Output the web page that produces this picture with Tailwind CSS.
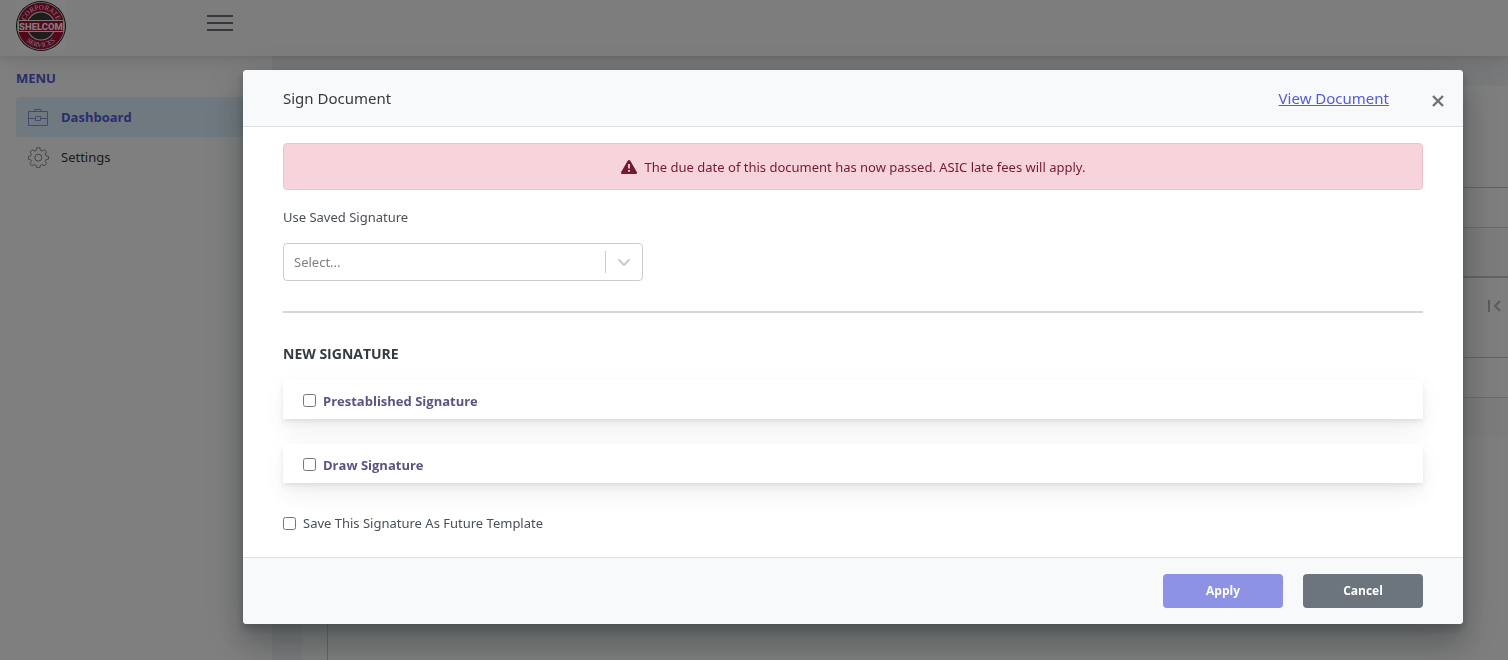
<!DOCTYPE html>
<html lang="en">
<head>
  <meta charset="UTF-8">
  <meta name="viewport" content="width=device-width, initial-scale=1.0">
  <title>Sign Document</title>
  <script src="https://cdn.jsdelivr.net/npm/@tailwindcss/browser@4"></script>
</head>
<body class="h-screen overflow-hidden bg-white font-['Noto_Sans',sans-serif] text-[13px] leading-5 text-[#495057]">

  <!-- App -->
  <div class="flex flex-col h-full">
    <header class="relative z-10 flex h-14 shrink-0 items-start gap-[141px] bg-[#fafbfc] px-4 shadow-[0_7px_35px_rgba(4,9,20,0.03),0_15px_22px_rgba(4,9,20,0.03),0_4px_8px_rgba(4,9,20,0.05),0_2px_3px_rgba(4,9,20,0.03)]">
      <a href="#" aria-label="Shelcom Corporate Services" class="pt-px">
        <svg class="size-[50px] bg-white" viewBox="0 0 50 50">
          <defs>
            <path id="arcTop" d="M8.500 25a16.500 16.500 0 0 1 33 0"/>
            <path id="arcBottom" d="M3.800 25a21.200 21.200 0 0 0 42.400 0"/>
          </defs>
          <circle cx="25" cy="25" r="25" fill="#1d1d1f"/>
          <circle cx="25" cy="25" r="24" fill="#eee"/>
          <circle cx="25" cy="25" r="23.200" fill="#a80d35"/>
          <circle cx="25" cy="25" r="14.400" fill="#eee"/>
          <circle cx="25" cy="25" r="13.400" fill="#3a3a3c"/>
          <text fill="#eee" font-family="Liberation Serif, serif" font-size="7" text-anchor="middle"><textPath href="#arcTop" startOffset="50%">CORPORATE</textPath></text>
          <text fill="#eee" font-family="Liberation Serif, serif" font-size="7" text-anchor="middle"><textPath href="#arcBottom" startOffset="50%">SERVICES</textPath></text>
          <path d="M2.500 19.500h45v11h-45z" fill="#a80d35" stroke="#eee"/>
          <text x="25" y="28.500" fill="#fff" font-family="Roboto, sans-serif" font-size="9.500" font-weight="800" text-anchor="middle">SHELCOM</text>
        </svg>
      </a>
      <button type="button" aria-label="Toggle menu" class="mt-[15px] flex w-[26px] flex-col gap-[5px]">
        <span class="h-0.5 w-full bg-[#6b6e74]"></span>
        <span class="h-0.5 w-full bg-[#6b6e74]"></span>
        <span class="h-0.5 w-full bg-[#6b6e74]"></span>
      </button>
    </header>

    <div class="flex flex-1 min-h-0">
      <nav class="w-68 shrink-0 bg-white px-4 pt-3 font-['Open_Sans',sans-serif]">
        <h5 class="font-bold text-[#545cd8]">MENU</h5>
        <ul class="mt-[9px]">
          <li>
            <a href="#" class="flex h-10 items-center gap-3 rounded bg-[#e0f3ff] pl-3 font-bold text-[#545cd8]">
              <svg class="size-[21px]" viewBox="0 0 21 21" fill="none" stroke="#8d93d6">
                <path d="M.5 4.500h19v14H.5zM7 4.500v-2h6v2M.5 11.500h7M12.500 11.500h7M7.500 9.500h5v4h-5z"/>
              </svg>
              Dashboard
            </a>
          </li>
          <li>
            <a href="#" class="flex h-10 items-center gap-3 pl-3 font-['Noto_Sans',sans-serif] text-[#343a40]">
              <svg class="size-[21px]" viewBox="0 0 21 21" fill="none" stroke="#888" stroke-linejoin="round">
                <path d="M8.700 .8h3.200l.5 2.500 1.800.8 2.200-1.400 2.200 2.200-1.400 2.200.8 1.800 2.500.5v2.800l-2.500.5-.8 1.800 1.400 2.200-2.200 2.200-2.200-1.400-1.800.8-.5 2.400H8.700l-.5-2.400-1.800-.8-2.200 1.400L2 16.700l1.400-2.200-.8-1.800L.5 12.200V9.400l2.100-.5.8-1.800L2 4.900l2.200-2.200 2.200 1.400 1.800-.8z"/>
                <circle cx="10.300" cy="10.600" r="3.500"/>
              </svg>
              Settings
            </a>
          </li>
        </ul>
      </nav>
      <main class="flex-1 bg-[#f1f4f6] pt-[30px] pl-[30px]">
        <div class="h-full bg-[#fcfcfc] pl-[25px]">
          <div class="h-full border-l border-[#c4c4c4]">
            <div class="h-[102px] border-b border-[#c4c4c4]"></div>
            <div class="h-10 border-b border-[#d4d4d4]"></div>
            <div class="h-[50px] border-b-2 border-[#c4c4c4] bg-[#f8f8f8]"></div>
            <div class="flex h-20 justify-end border-b border-[#c4c4c4] pt-5 pr-[7px]">
              <button type="button" aria-label="First page" class="h-4">
                <svg class="h-4 w-[13px]" viewBox="0 0 13 16" fill="none" stroke="#b8b8b8" stroke-width="2"><path d="M1 2v12M12 3L7 8l5 5"/></svg>
              </button>
            </div>
            <div class="h-10 border-b border-[#d4d4d4]"></div>
            <div class="h-10 bg-[#f8f8f8]"></div>
          </div>
        </div>
      </main>
    </div>
  </div>

  <!-- Modal -->
  <div class="fixed inset-0 z-20 bg-black/50 pt-[70px] pr-[45px] pl-[243px]">
    <div role="dialog" aria-modal="true" aria-labelledby="modalTitle" class="overflow-hidden rounded bg-white shadow-[0_12px_40px_rgba(52,58,64,0.3),0_21px_27px_rgba(52,58,64,0.3),0_9px_9px_rgba(0,0,0,0.05),0_4px_7px_rgba(52,58,64,0.3)]">
      <div class="flex h-[57px] items-center border-b border-[#dee2e6] bg-[#f8f9fa] pr-4 pl-10">
        <h5 id="modalTitle" class="flex-1 text-[15px] text-[#343a40]">Sign Document</h5>
        <a href="#" class="text-[15px] text-[#545cd8] underline">View Document</a>
        <button type="button" aria-label="Close" class="ml-10 flex size-[18px] items-end justify-center">
          <svg class="size-3" viewBox="0 0 12 12" fill="none" stroke="#707274" stroke-width="2.400"><path d="M1 1l10 10M11 1L1 11"/></svg>
        </button>
      </div>

      <form id="signForm" class="px-10 pt-4 pb-6">
        <div role="alert" class="flex h-[47px] items-center justify-center gap-2 rounded border border-[#f0c0cd] bg-[#f7d3db] text-[#721933]">
          <svg class="h-3.5 w-4" viewBox="0 0 16 14">
            <path d="M8 0c.6 0 1 .3 1.300.8l6.500 11.100c.6 1-.1 2.100-1.200 2.100H1.400C.3 14-.4 12.900.2 11.900L6.700.8C7 .3 7.400 0 8 0z" fill="#721933"/>
            <path d="M7.100 4h1.800v4.500H7.100zM7.100 10h1.800v1.800H7.100z" fill="#f7d3db"/>
          </svg>
          The due date of this document has now passed. ASIC late fees will apply.
        </div>

        <label for="savedSignature" class="mt-[17px] block">Use Saved Signature</label>
        <div class="relative mt-4 w-90">
          <select id="savedSignature" class="h-[38px] w-full appearance-none rounded border border-[#ccc] bg-white px-2.5 text-[#808080]">
            <option>Select...</option>
          </select>
          <div class="pointer-events-none absolute inset-y-2 right-0 flex w-[38px] items-center border-l border-[#ccc] pl-2">
            <svg class="size-5" viewBox="0 0 20 20" fill="none" stroke="#ccc" stroke-width="2" stroke-linecap="round" stroke-linejoin="round"><path d="M5 8l5 5 5-5"/></svg>
          </div>
        </div>

        <hr class="mt-[30px] border-t-2 border-[#d6d7d8]">

        <h6 class="mt-[31px] font-['Open_Sans',sans-serif] text-sm font-bold text-[#343a40]">NEW SIGNATURE</h6>
        <label class="mt-4 flex h-[39px] items-center gap-[7px] bg-white px-5 pt-0.5 font-['Open_Sans',sans-serif] font-bold text-[#5a5480] shadow-[0_7px_35px_rgba(8,10,37,0.03),0_15px_22px_rgba(8,10,37,0.03),0_4px_8px_rgba(8,10,37,0.05),0_2px_3px_rgba(8,10,37,0.05)]">
          <input type="checkbox" class="size-[13px]">
          Prestablished Signature
        </label>
        <label class="mt-[25px] flex h-[39px] items-center gap-[7px] bg-white px-5 pt-0.5 font-['Open_Sans',sans-serif] font-bold text-[#5a5480] shadow-[0_7px_35px_rgba(8,10,37,0.03),0_15px_22px_rgba(8,10,37,0.03),0_4px_8px_rgba(8,10,37,0.05),0_2px_3px_rgba(8,10,37,0.05)]">
          <input type="checkbox" class="size-[13px]">
          Draw Signature
        </label>
        <label class="mt-[30px] flex items-center gap-[7px]">
          <input type="checkbox" class="size-[13px]">
          Save This Signature As Future Template
        </label>
      </form>

      <div class="flex justify-end gap-5 border-t border-[#dee2e6] bg-[#f8f9fa] px-10 py-4 font-['Open_Sans',sans-serif] text-xs font-bold text-white">
        <button type="submit" form="signForm" class="h-[34px] w-30 rounded bg-[#8d92e4]">Apply</button>
        <button type="button" class="h-[34px] w-30 rounded bg-[#6c757d]">Cancel</button>
      </div>
    </div>
  </div>

</body>
</html>
